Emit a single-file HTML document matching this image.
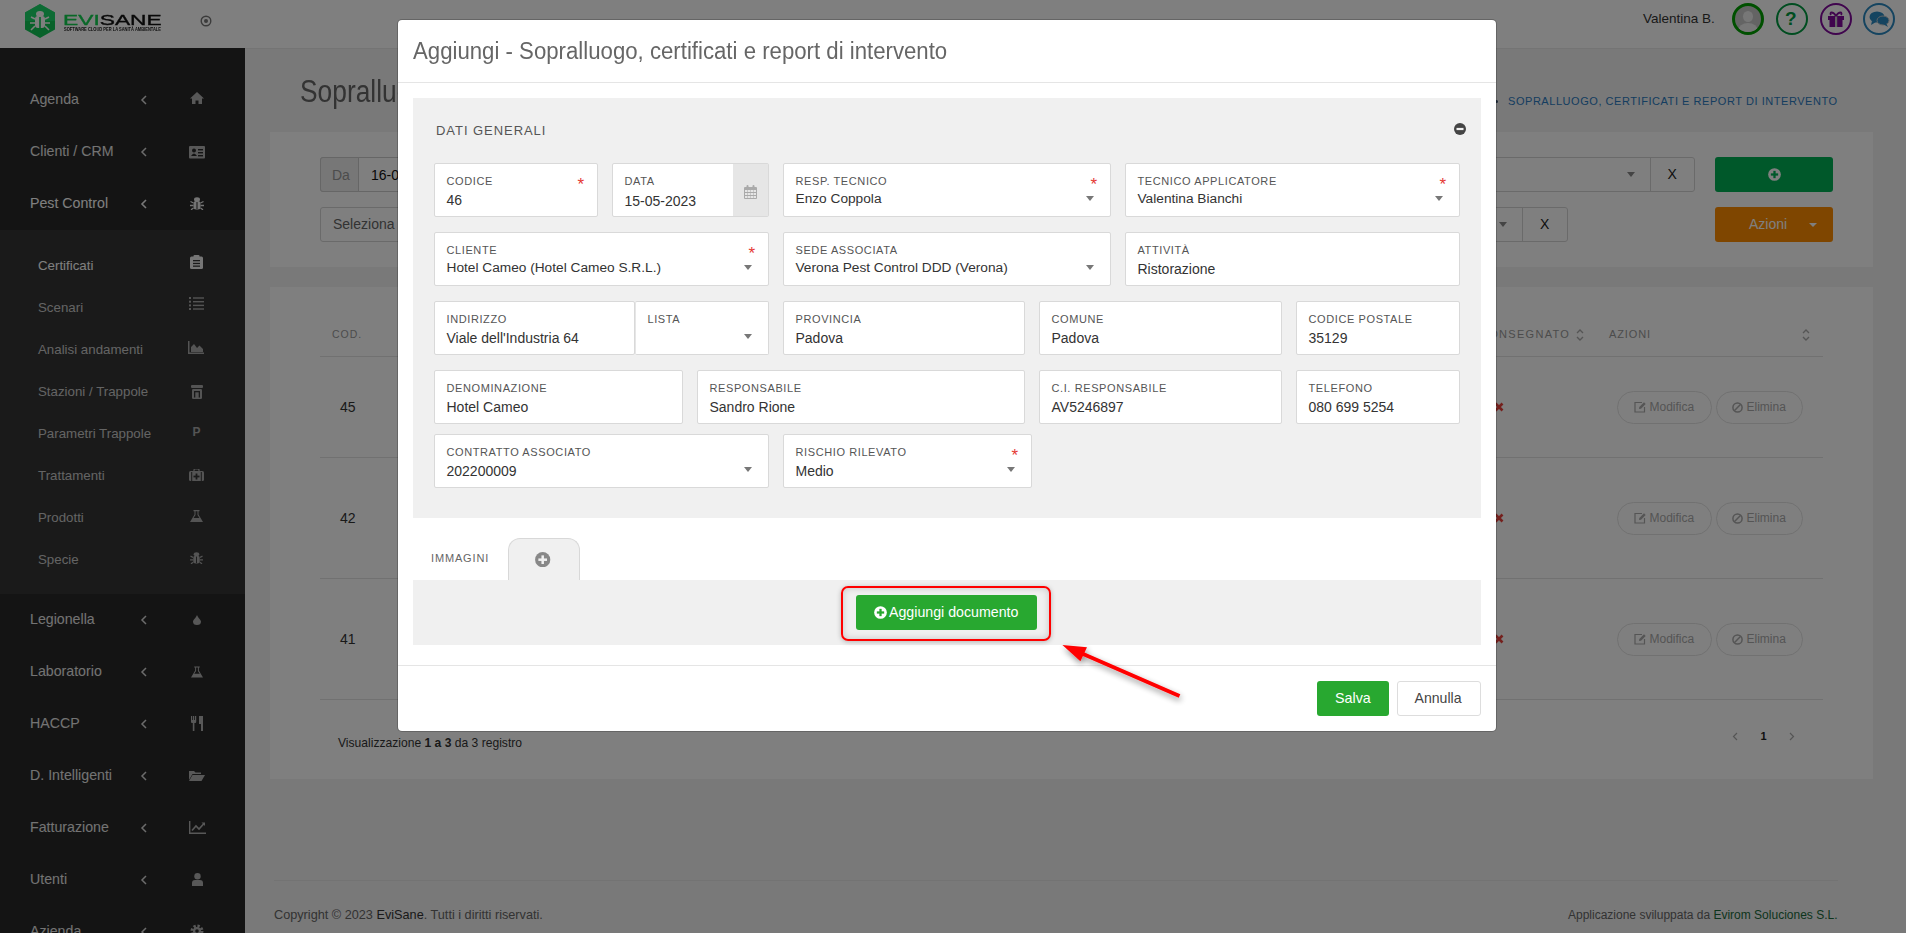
<!DOCTYPE html>
<html><head><meta charset="utf-8">
<style>
*{box-sizing:border-box}
html,body{margin:0;padding:0}
body{width:1906px;height:933px;overflow:hidden;position:relative;background:#f2f2f2;font-family:"Liberation Sans",sans-serif;color:#333}
.a{position:absolute}
.t{position:absolute;white-space:nowrap;line-height:1}
/* header */
#hdr{left:0;top:0;width:1906px;height:48px;background:#fff}
/* sidebar */
#side{left:0;top:48px;width:245px;height:885px;background:#292929}
#sub{left:0;top:229.5px;width:245px;height:364px;background:#353535}
.mi{font-size:14.2px;color:#e6e6e6}
.si{font-size:13.3px;color:#c8c8c8}
.chev{font-size:14px;color:#d0d0d0}
.card{background:#fff}
#ovl{left:0;top:0;width:1906px;height:933px;background:rgba(0,0,0,.5)}
/* modal */
#modal{left:397px;top:19px;width:1100px;height:713px;background:#fff;border-radius:5px;border:1px solid rgba(0,0,0,.2);background-clip:padding-box}
.panel{background:#f0f0f0}
.box{position:absolute;background:#fff;border:1px solid #d9d9d9;border-radius:2px}
.lbl{position:absolute;white-space:nowrap;line-height:1;font-size:11px;letter-spacing:.6px;color:#555;left:11.5px;top:11.5px}
.val{position:absolute;white-space:nowrap;line-height:1;font-size:14px;color:#333;left:11.5px;top:28.8px}
.dval{position:absolute;white-space:nowrap;line-height:1;font-size:14px;color:#333;left:11.5px;top:29.5px}
.sval{position:absolute;white-space:nowrap;line-height:1;font-size:13.7px;color:#333;left:11.5px;top:27.9px}
.req{position:absolute;color:#e53935;font-size:17px;line-height:1;top:11.5px;right:13px}
.caret{position:absolute;width:0;height:0;border-left:4px solid transparent;border-right:4px solid transparent;border-top:5px solid #777;top:31.5px;right:16px}
</style></head><body>

<!-- ===== BACKGROUND PAGE ===== -->
<div id="hdr" class="a">
  <svg class="a" style="left:24px;top:3px" width="32" height="36" viewBox="0 0 32 36">
    <polygon points="16,1 31,9.5 31,26.5 16,35 1,26.5 1,9.5" fill="#10c455"/>
    <polygon points="16,1 31,9.5 31,18 1,18 1,9.5" fill="#20e070" opacity=".7"/>
    <g fill="#fff">
      <ellipse cx="16" cy="11" rx="4" ry="3"/>
      <rect x="11" y="13" width="10" height="12" rx="3"/>
    </g>
    <g stroke="#fff" stroke-width="1.6" fill="none">
      <path d="M11 16 L7 14 M11 20 L6 20 M11 23 L7 27 M21 16 L25 14 M21 20 L26 20 M21 23 L25 27"/>
    </g>
    <rect x="15.2" y="14" width="1.6" height="11" fill="#10c455"/>
  </svg>
  <div class="t" style="left:63.3px;top:12px;font-size:17px;font-weight:normal;color:#111;transform:scale(1.34,0.9);transform-origin:0 0;-webkit-text-stroke:0.4px #111"><span style="color:#12d050;-webkit-text-stroke:0.4px #12d050">EVI</span>SANE</div>
  <div class="t" style="left:64px;top:26px;font-size:6px;font-weight:bold;color:#222;transform:scale(0.67,0.9);transform-origin:0 0">SOFTWARE CLOUD PER LA SANITÀ AMBIENTALE</div>
  <svg class="a" style="left:200px;top:15px" width="12" height="12" viewBox="0 0 12 12"><circle cx="6" cy="6" r="4.8" fill="none" stroke="#777" stroke-width="1.4"/><circle cx="6" cy="6" r="2" fill="#777"/></svg>

  <div class="t" style="left:1643px;top:12px;font-size:13.5px;color:#333">Valentina B.</div>
  <div class="a" style="left:1732px;top:3px;width:32px;height:32px;border-radius:50%;border:3px solid #00a000;background:#c8c8c8;overflow:hidden">
    <div class="a" style="left:8px;top:5px;width:10px;height:11px;border-radius:50%;background:#eee"></div>
    <div class="a" style="left:3px;top:17px;width:20px;height:16px;border-radius:50%;background:#eee"></div>
  </div>
  <div class="a" style="left:1776px;top:3px;width:32px;height:32px;border-radius:50%;border:2px solid #009a40"></div>
  <div class="t" style="left:1785px;top:9px;font-size:19px;font-weight:bold;color:#009a40">?</div>
  <div class="a" style="left:1820px;top:3px;width:32px;height:32px;border-radius:50%;border:2px solid #800a9c"></div>
  <svg class="a" style="left:1826px;top:10px" width="20" height="18" viewBox="0 0 20 18"><g fill="#800a9c"><rect x="2" y="6" width="16" height="4"/><rect x="3.5" y="10" width="13" height="7"/></g><rect x="9" y="6" width="2.2" height="11" fill="#c8c8c8"/><path d="M10 6 C7 1 3 2 5 5 M10 6 C13 1 17 2 15 5" stroke="#800a9c" stroke-width="1.8" fill="none"/></svg>
  <div class="a" style="left:1863px;top:3px;width:32px;height:32px;border-radius:50%;border:2px solid #2a88c0"></div>
  <svg class="a" style="left:1869px;top:10px" width="21" height="18" viewBox="0 0 21 18"><ellipse cx="8" cy="7" rx="7.5" ry="5.5" fill="#2a88c0"/><path d="M3 11 L2 15 L7 12Z" fill="#2a88c0"/><ellipse cx="14" cy="10.5" rx="6" ry="4.5" fill="#2a88c0" stroke="#c8c8c8" stroke-width="1"/><path d="M17 13 L19 17 L14 14Z" fill="#2a88c0"/></svg>
</div>

<div class="a" style="left:245px;top:48px;width:1661px;height:1px;background:#e8e8e8"></div>
<div id="side" class="a"></div>
<div id="sub" class="a"></div>
<div id="sidetext">
  <div class="t mi" style="left:30px;top:92px">Agenda</div>
  <div class="t mi" style="left:30px;top:144px">Clienti / CRM</div>
  <div class="t mi" style="left:30px;top:196px;color:#fff">Pest Control</div>
  <div class="t si" style="left:38px;top:258.5px;color:#fff">Certificati</div>
  <div class="t si" style="left:38px;top:300.5px">Scenari</div>
  <div class="t si" style="left:38px;top:342.5px">Analisi andamenti</div>
  <div class="t si" style="left:38px;top:384.5px">Stazioni / Trappole</div>
  <div class="t si" style="left:38px;top:426.5px">Parametri Trappole</div>
  <div class="t si" style="left:38px;top:468.5px">Trattamenti</div>
  <div class="t si" style="left:38px;top:510.5px">Prodotti</div>
  <div class="t si" style="left:38px;top:552.5px">Specie</div>
  <div class="t mi" style="left:30px;top:612px">Legionella</div>
  <div class="t mi" style="left:30px;top:664px">Laboratorio</div>
  <div class="t mi" style="left:30px;top:716px">HACCP</div>
  <div class="t mi" style="left:30px;top:768px">D. Intelligenti</div>
  <div class="t mi" style="left:30px;top:820px">Fatturazione</div>
  <div class="t mi" style="left:30px;top:872px">Utenti</div>
  <div class="t mi" style="left:30px;top:924px">Azienda</div>
</div>

<!-- content -->
<div class="t" style="left:299.7px;top:76.3px;font-size:31px;color:#666;transform:scaleX(0.85);transform-origin:0 0">Sopralluogo, certificati e report di intervento</div>
<div class="t" style="left:1508px;top:95.5px;font-size:11px;letter-spacing:.55px;color:#2b7bc0">SOPRALLUOGO, CERTIFICATI E REPORT DI INTERVENTO</div>

<div class="a card" style="left:270px;top:132px;width:1603px;height:135px"></div>
<div class="a card" style="left:270px;top:287px;width:1603px;height:492px"></div>

<div id="sideicons">
 <!-- chevrons -->
 <svg class="a" style="left:140px;top:94.5px" width="8" height="10" viewBox="0 0 8 10"><path d="M6 1 L2 5 L6 9" fill="none" stroke="#d8d8d8" stroke-width="1.5"/></svg>
 <svg class="a" style="left:140px;top:146.5px" width="8" height="10" viewBox="0 0 8 10"><path d="M6 1 L2 5 L6 9" fill="none" stroke="#d8d8d8" stroke-width="1.5"/></svg>
 <svg class="a" style="left:140px;top:198.5px" width="8" height="10" viewBox="0 0 8 10"><path d="M6 1 L2 5 L6 9" fill="none" stroke="#f0f0f0" stroke-width="1.6"/></svg>
 <svg class="a" style="left:140px;top:614.5px" width="8" height="10" viewBox="0 0 8 10"><path d="M6 1 L2 5 L6 9" fill="none" stroke="#d8d8d8" stroke-width="1.5"/></svg>
 <svg class="a" style="left:140px;top:666.5px" width="8" height="10" viewBox="0 0 8 10"><path d="M6 1 L2 5 L6 9" fill="none" stroke="#d8d8d8" stroke-width="1.5"/></svg>
 <svg class="a" style="left:140px;top:718.5px" width="8" height="10" viewBox="0 0 8 10"><path d="M6 1 L2 5 L6 9" fill="none" stroke="#d8d8d8" stroke-width="1.5"/></svg>
 <svg class="a" style="left:140px;top:770.5px" width="8" height="10" viewBox="0 0 8 10"><path d="M6 1 L2 5 L6 9" fill="none" stroke="#d8d8d8" stroke-width="1.5"/></svg>
 <svg class="a" style="left:140px;top:822.5px" width="8" height="10" viewBox="0 0 8 10"><path d="M6 1 L2 5 L6 9" fill="none" stroke="#d8d8d8" stroke-width="1.5"/></svg>
 <svg class="a" style="left:140px;top:874.5px" width="8" height="10" viewBox="0 0 8 10"><path d="M6 1 L2 5 L6 9" fill="none" stroke="#d8d8d8" stroke-width="1.5"/></svg>
 <svg class="a" style="left:140px;top:926.5px" width="8" height="10" viewBox="0 0 8 10"><path d="M6 1 L2 5 L6 9" fill="none" stroke="#d8d8d8" stroke-width="1.5"/></svg>
 <!-- main icons -->
 <svg class="a" style="left:190px;top:92px" width="14" height="12" viewBox="0 0 14 12"><path d="M7 0 L14 6.5 L12 6.5 L12 12 L8.5 12 L8.5 8.5 L5.5 8.5 L5.5 12 L2 12 L2 6.5 L0 6.5Z" fill="#b0b0b0"/></svg>
 <svg class="a" style="left:189px;top:145.5px" width="16" height="13" viewBox="0 0 16 13"><rect x="0" y="0" width="16" height="12.5" rx="1" fill="#b0b0b0"/><circle cx="5" cy="4.5" r="2" fill="#292929"/><path d="M2 10 Q5 5 8 10Z" fill="#292929"/><rect x="9" y="3" width="5" height="1.4" fill="#292929"/><rect x="9" y="6" width="5" height="1.4" fill="#292929"/><rect x="9" y="9" width="5" height="1.4" fill="#292929"/></svg>
 <svg class="a" style="left:190px;top:197px" width="14" height="13" viewBox="0 0 14 13"><ellipse cx="7" cy="2.5" rx="3" ry="2.3" fill="#e8e8e8"/><rect x="3.5" y="4" width="7" height="8.5" rx="2.5" fill="#e8e8e8"/><path d="M3.5 6 L0.5 4.5 M3.5 8.5 L0 8.5 M3.5 11 L1 12.8 M10.5 6 L13.5 4.5 M10.5 8.5 L14 8.5 M10.5 11 L13 12.8" stroke="#e8e8e8" stroke-width="1.3"/><rect x="6.5" y="5" width="1" height="7" fill="#292929"/></svg>
 <!-- sub icons -->
 <svg class="a" style="left:189.5px;top:255px" width="13" height="14" viewBox="0 0 13 14"><rect x="0" y="1.5" width="13" height="12.5" rx="1.5" fill="#ececec"/><rect x="3.5" y="0" width="6" height="3" rx="1" fill="#ececec"/><g fill="#353535"><rect x="3" y="5" width="7" height="1.3"/><rect x="3" y="7.8" width="7" height="1.3"/><rect x="3" y="10.5" width="7" height="1.3"/></g></svg>
 <svg class="a" style="left:189px;top:297px" width="15" height="13" viewBox="0 0 15 13"><g fill="#a8a8a8"><rect x="0" y="0" width="2" height="2"/><rect x="0" y="3.7" width="2" height="2"/><rect x="0" y="7.4" width="2" height="2"/><rect x="0" y="11" width="2" height="2"/><rect x="4" y="0.3" width="11" height="1.4"/><rect x="4" y="4" width="11" height="1.4"/><rect x="4" y="7.7" width="11" height="1.4"/><rect x="4" y="11.3" width="11" height="1.4"/></g></svg>
 <svg class="a" style="left:187.5px;top:341px" width="16" height="13" viewBox="0 0 16 13"><path d="M0 0 L1.5 0 L1.5 11.5 L16 11.5 L16 13 L0 13Z M3 11 L3 6 L6 3 L9 7 L11.5 4.5 L15 8 L15 11Z" fill="#a8a8a8"/></svg>
 <svg class="a" style="left:190.5px;top:385px" width="12" height="14" viewBox="0 0 12 14"><g fill="#a8a8a8"><rect x="0" y="0" width="12" height="3" rx="1"/><rect x="1" y="4" width="10" height="10" rx="1.2"/></g><rect x="3" y="6" width="6" height="1.3" fill="#353535"/><rect x="3" y="6" width="1.3" height="6.5" fill="#353535"/><rect x="7.7" y="6" width="1.3" height="6.5" fill="#353535"/></svg>
 <div class="t" style="left:192.5px;top:426px;font-size:12px;font-weight:bold;color:#a8a8a8">P</div>
 <svg class="a" style="left:188.5px;top:469px" width="15" height="12" viewBox="0 0 15 12"><rect x="0" y="2" width="15" height="10" rx="1.5" fill="#a8a8a8"/><rect x="5" y="0" width="5" height="3" rx="1" fill="none" stroke="#a8a8a8" stroke-width="1.2"/><rect x="2.2" y="3" width="1" height="9" fill="#353535"/><rect x="11.8" y="3" width="1" height="9" fill="#353535"/><rect x="6.6" y="4.5" width="1.8" height="6" fill="#353535"/><rect x="4.5" y="6.6" width="6" height="1.8" fill="#353535"/></svg>
 <svg class="a" style="left:189.5px;top:510px" width="13" height="12" viewBox="0 0 13 12"><path d="M3.5 0 L9.5 0 L9.5 1.2 L8.5 1.2 L8.5 4.5 L13 12 L0 12 L4.5 4.5 L4.5 1.2 L3.5 1.2Z" fill="#a8a8a8"/><path d="M5.5 1.2 L7.5 1.2 L7.5 5 L9.5 8 L3.5 8 L5.5 5Z" fill="#353535"/></svg>
 <svg class="a" style="left:189.5px;top:552px" width="13" height="12" viewBox="0 0 14 13"><ellipse cx="7" cy="2.5" rx="3" ry="2.3" fill="#a8a8a8"/><rect x="3.5" y="4" width="7" height="8.5" rx="2.5" fill="#a8a8a8"/><path d="M3.5 6 L0.5 4.5 M3.5 8.5 L0 8.5 M3.5 11 L1 12.8 M10.5 6 L13.5 4.5 M10.5 8.5 L14 8.5 M10.5 11 L13 12.8" stroke="#a8a8a8" stroke-width="1.3"/><rect x="6.5" y="5" width="1" height="7" fill="#353535"/></svg>
 <!-- lower main icons -->
 <svg class="a" style="left:192.5px;top:614.5px" width="8" height="10" viewBox="0 0 8 10"><path d="M4 0 C5 3 8 5 8 6.5 A4 3.5 0 0 1 0 6.5 C0 5 3 3 4 0Z" fill="#b0b0b0"/></svg>
 <svg class="a" style="left:191px;top:666px" width="12" height="12" viewBox="0 0 13 12"><path d="M3.5 0 L9.5 0 L9.5 1.2 L8.5 1.2 L8.5 4.5 L13 12 L0 12 L4.5 4.5 L4.5 1.2 L3.5 1.2Z" fill="#b0b0b0"/><path d="M5.5 1.2 L7.5 1.2 L7.5 5 L9.5 8 L3.5 8 L5.5 5Z" fill="#292929"/></svg>
 <svg class="a" style="left:191px;top:716px" width="12" height="15" viewBox="0 0 12 15"><g fill="#b0b0b0"><rect x="0" y="0" width="1.2" height="5"/><rect x="2" y="0" width="1.2" height="5"/><rect x="4" y="0" width="1.2" height="5"/><rect x="0" y="4" width="5.2" height="3" rx="1"/><rect x="1.8" y="6" width="1.6" height="9"/><path d="M8 0 L12 0 L12 15 L10 15 L10 8 L8 8Z"/></g></svg>
 <svg class="a" style="left:189px;top:770px" width="16" height="11" viewBox="0 0 16 11"><path d="M0 1 L5 1 L6.5 2.5 L12 2.5 L12 4 L3.5 4 L0 10Z" fill="#b0b0b0"/><path d="M3.5 5 L16 5 L12.5 11 L0 11Z" fill="#b0b0b0"/></svg>
 <svg class="a" style="left:188.5px;top:821px" width="17" height="13" viewBox="0 0 17 13"><path d="M0 0 L1.4 0 L1.4 11.6 L17 11.6 L17 13 L0 13Z" fill="#b0b0b0"/><path d="M3 9.5 L7 5 L10 8 L15 2.5" fill="none" stroke="#b0b0b0" stroke-width="1.6"/><path d="M12.5 1.5 L16 1.5 L16 5Z" fill="#b0b0b0"/></svg>
 <svg class="a" style="left:192px;top:873px" width="11" height="13" viewBox="0 0 11 13"><circle cx="5.5" cy="3.2" r="3.2" fill="#b0b0b0"/><path d="M0 13 L0 10 Q0 7 3 7 L8 7 Q11 7 11 10 L11 13Z" fill="#b0b0b0"/></svg>
 <svg class="a" style="left:190px;top:924px" width="14" height="14" viewBox="0 0 14 14"><circle cx="7" cy="7" r="5" fill="none" stroke="#b0b0b0" stroke-width="3" stroke-dasharray="2.2 1.7"/><circle cx="7" cy="7" r="4" fill="#b0b0b0"/><circle cx="7" cy="7" r="1.8" fill="#292929"/></svg>
</div>

<!-- filter card content -->
<div class="a" style="left:320px;top:157px;width:400px;height:35px;border:1px solid #ccc;border-radius:3px;background:#fff"></div>
<div class="a" style="left:320px;top:157px;width:39px;height:35px;border:1px solid #ccc;border-radius:3px 0 0 3px;background:#eee"></div>
<div class="t" style="left:332px;top:168px;font-size:14px;color:#999">Da</div>
<div class="t" style="left:371px;top:168px;font-size:14px;color:#111">16-05-2023</div>
<div class="a" style="left:320px;top:207px;width:400px;height:35px;border:1px solid #d5d5d5;border-radius:3px;background:#fff"></div>
<div class="t" style="left:333px;top:217px;font-size:14px;color:#666">Seleziona</div>
<!-- right selects -->
<div class="a" style="left:1400px;top:157px;width:295px;height:35px;border:1px solid #d5d5d5;border-radius:0 3px 3px 0;background:#fff"></div>
<div class="a" style="left:1650px;top:157px;width:1px;height:35px;background:#d5d5d5"></div>
<div class="a" style="left:1627px;top:172px;width:0;height:0;border-left:4px solid transparent;border-right:4px solid transparent;border-top:5px solid #888"></div>
<div class="t" style="left:1667.5px;top:167px;font-size:14px;color:#222">X</div>
<div class="a" style="left:1400px;top:207px;width:168px;height:35px;border:1px solid #d5d5d5;border-radius:0 3px 3px 0;background:#fff"></div>
<div class="a" style="left:1522px;top:207px;width:1px;height:35px;background:#d5d5d5"></div>
<div class="a" style="left:1499px;top:222px;width:0;height:0;border-left:4px solid transparent;border-right:4px solid transparent;border-top:5px solid #888"></div>
<div class="t" style="left:1540px;top:217px;font-size:14px;color:#222">X</div>
<div class="a" style="left:1715px;top:157px;width:118px;height:35px;background:#00b055;border-radius:3px"></div>
<svg class="a" style="left:1768px;top:168px" width="13" height="13" viewBox="0 0 16 16"><circle cx="8" cy="8" r="7.8" fill="#fff"/><rect x="3.5" y="6.6" width="9" height="2.8" fill="#00b055"/><rect x="6.6" y="3.5" width="2.8" height="9" fill="#00b055"/></svg>
<div class="a" style="left:1715px;top:207px;width:118px;height:35px;background:#fe8d00;border-radius:3px"></div>
<div class="t" style="left:1749px;top:217px;font-size:14px;color:#fff">Azioni</div>
<div class="a" style="left:1809px;top:223px;width:0;height:0;border-left:4px solid transparent;border-right:4px solid transparent;border-top:4.5px solid #fff"></div>

<!-- table -->
<div class="t" style="left:332px;top:329px;font-size:10.5px;letter-spacing:1px;color:#999">COD.</div>
<div class="t" style="left:1480px;top:329px;font-size:11px;letter-spacing:1.3px;color:#999">CONSEGNATO</div>
<svg class="a" style="left:1575.5px;top:328.5px" width="8" height="12" viewBox="0 0 8 12"><path d="M1 4 L4 1 L7 4 M1 8 L4 11 L7 8" fill="none" stroke="#aaa" stroke-width="1.4"/></svg>
<div class="t" style="left:1609px;top:329px;font-size:11px;letter-spacing:.9px;color:#999">AZIONI</div>
<svg class="a" style="left:1801.5px;top:328.5px" width="8" height="12" viewBox="0 0 8 12"><path d="M1 4 L4 1 L7 4 M1 8 L4 11 L7 8" fill="none" stroke="#aaa" stroke-width="1.4"/></svg>
<div class="a" style="left:320px;top:356px;width:1503px;height:1px;background:#e3e3e3"></div>
<div class="a" style="left:320px;top:457px;width:1503px;height:1px;background:#e3e3e3"></div>
<div class="a" style="left:320px;top:578px;width:1503px;height:1px;background:#e3e3e3"></div>
<div class="a" style="left:320px;top:699px;width:1503px;height:1px;background:#e3e3e3"></div>
<div class="t" style="left:340px;top:400px;font-size:14px;color:#333">45</div>
<svg class="a" style="left:1494px;top:402px" width="10" height="10" viewBox="0 0 10 10"><path d="M1.5 1.5 L8.5 8.5 M8.5 1.5 L1.5 8.5" stroke="#e8403a" stroke-width="2.6"/></svg>
<div class="a" style="left:1617px;top:390.5px;width:95px;height:33px;border:1px solid #e2e2e2;border-radius:17px"></div>
<svg class="a" style="left:1633.5px;top:401px" width="12" height="12" viewBox="0 0 12 12"><path d="M8 1.5 L1 1.5 L1 11 L10.5 11 L10.5 6" fill="none" stroke="#aaa" stroke-width="1.2"/><path d="M5 8 L5.3 6 L10 1.3 L11.7 3 L7 7.7Z" fill="#aaa"/></svg>
<div class="t" style="left:1649.5px;top:400.5px;font-size:12px;color:#aaa">Modifica</div>
<div class="a" style="left:1716px;top:390.5px;width:87px;height:33px;border:1px solid #e2e2e2;border-radius:17px"></div>
<svg class="a" style="left:1732px;top:401.5px" width="11" height="11" viewBox="0 0 11 11"><circle cx="5.5" cy="5.5" r="4.6" fill="none" stroke="#aaa" stroke-width="1.5"/><path d="M2.3 8.7 L8.7 2.3" stroke="#aaa" stroke-width="1.5"/></svg>
<div class="t" style="left:1746.5px;top:400.5px;font-size:12px;color:#aaa">Elimina</div>
<div class="t" style="left:340px;top:511px;font-size:14px;color:#333">42</div>
<svg class="a" style="left:1494px;top:513px" width="10" height="10" viewBox="0 0 10 10"><path d="M1.5 1.5 L8.5 8.5 M8.5 1.5 L1.5 8.5" stroke="#e8403a" stroke-width="2.6"/></svg>
<div class="a" style="left:1617px;top:501.5px;width:95px;height:33px;border:1px solid #e2e2e2;border-radius:17px"></div>
<svg class="a" style="left:1633.5px;top:512px" width="12" height="12" viewBox="0 0 12 12"><path d="M8 1.5 L1 1.5 L1 11 L10.5 11 L10.5 6" fill="none" stroke="#aaa" stroke-width="1.2"/><path d="M5 8 L5.3 6 L10 1.3 L11.7 3 L7 7.7Z" fill="#aaa"/></svg>
<div class="t" style="left:1649.5px;top:511.5px;font-size:12px;color:#aaa">Modifica</div>
<div class="a" style="left:1716px;top:501.5px;width:87px;height:33px;border:1px solid #e2e2e2;border-radius:17px"></div>
<svg class="a" style="left:1732px;top:512.5px" width="11" height="11" viewBox="0 0 11 11"><circle cx="5.5" cy="5.5" r="4.6" fill="none" stroke="#aaa" stroke-width="1.5"/><path d="M2.3 8.7 L8.7 2.3" stroke="#aaa" stroke-width="1.5"/></svg>
<div class="t" style="left:1746.5px;top:511.5px;font-size:12px;color:#aaa">Elimina</div>
<div class="t" style="left:340px;top:632px;font-size:14px;color:#333">41</div>
<svg class="a" style="left:1494px;top:634px" width="10" height="10" viewBox="0 0 10 10"><path d="M1.5 1.5 L8.5 8.5 M8.5 1.5 L1.5 8.5" stroke="#e8403a" stroke-width="2.6"/></svg>
<div class="a" style="left:1617px;top:622.5px;width:95px;height:33px;border:1px solid #e2e2e2;border-radius:17px"></div>
<svg class="a" style="left:1633.5px;top:633px" width="12" height="12" viewBox="0 0 12 12"><path d="M8 1.5 L1 1.5 L1 11 L10.5 11 L10.5 6" fill="none" stroke="#aaa" stroke-width="1.2"/><path d="M5 8 L5.3 6 L10 1.3 L11.7 3 L7 7.7Z" fill="#aaa"/></svg>
<div class="t" style="left:1649.5px;top:632.5px;font-size:12px;color:#aaa">Modifica</div>
<div class="a" style="left:1716px;top:622.5px;width:87px;height:33px;border:1px solid #e2e2e2;border-radius:17px"></div>
<svg class="a" style="left:1732px;top:633.5px" width="11" height="11" viewBox="0 0 11 11"><circle cx="5.5" cy="5.5" r="4.6" fill="none" stroke="#aaa" stroke-width="1.5"/><path d="M2.3 8.7 L8.7 2.3" stroke="#aaa" stroke-width="1.5"/></svg>
<div class="t" style="left:1746.5px;top:632.5px;font-size:12px;color:#aaa">Elimina</div>
<div class="t" style="left:338px;top:737px;font-size:12.1px;color:#333">Visualizzazione <b>1 a 3</b> da 3 registro</div>
<svg class="a" style="left:1732px;top:732px" width="6" height="9" viewBox="0 0 6 9"><path d="M5 1 L1.5 4.5 L5 8" fill="none" stroke="#aaa" stroke-width="1.2"/></svg>
<div class="t" style="left:1760.5px;top:731px;font-size:11px;font-weight:bold;color:#222">1</div>
<svg class="a" style="left:1789px;top:732px" width="6" height="9" viewBox="0 0 6 9"><path d="M1 1 L4.5 4.5 L1 8" fill="none" stroke="#aaa" stroke-width="1.2"/></svg>

<!-- footer -->
<div class="a" style="left:274px;top:880px;width:1564px;height:1px;background:#e6e6e6"></div>
<div class="t" style="left:274px;top:909px;font-size:12.7px;color:#666">Copyright © 2023 <span style="color:#333">EviSane</span>. Tutti i diritti riservati.</div>
<div class="t" style="left:1568px;top:909px;font-size:12px;color:#666">Applicazione sviluppata da <span style="color:#1a6a3a">Evirom Soluciones S.L.</span></div>

<!-- ===== OVERLAY ===== -->
<div id="ovl" class="a"></div>

<!-- ===== MODAL ===== -->
<div class="a" style="left:1495px;top:99.5px;width:3px;height:3px;border-radius:50%;background:#1c2838"></div>
<div id="modal" class="a"></div>
<div class="t" style="left:413px;top:40.4px;font-size:23px;color:#666;transform:scaleX(0.965);transform-origin:0 0">Aggiungi - Sopralluogo, certificati e report di intervento</div>
<div class="a" style="left:398px;top:82px;width:1098px;height:1px;background:#e5e5e5"></div>
<div class="a panel" style="left:413px;top:98px;width:1068px;height:420px"></div>
<div class="t" style="left:436px;top:123.5px;font-size:13px;letter-spacing:.95px;color:#555">DATI GENERALI</div>
<svg class="a" style="left:1454px;top:122.5px" width="12" height="12" viewBox="0 0 12 12"><circle cx="6" cy="6" r="6" fill="#444"/><rect x="2.5" y="4.9" width="7" height="2.2" fill="#f0f0f0"/></svg>
<div class="box" style="left:434px;top:163px;width:164px;height:54px;">
<div class="lbl">CODICE</div>
<div class="val">46</div>
<div class="req">*</div>
</div>
<div class="box" style="left:612px;top:163px;width:157px;height:54px;">
<div class="lbl">DATA</div>
<div class="dval">15-05-2023</div>
<div class="a" style="right:0;top:0;width:35px;height:52px;background:#e6e6e6"></div>
<svg class="a" style="right:11px;top:20.5px" width="13" height="14" viewBox="0 0 13 14"><g fill="#aaa"><rect x="0" y="2" width="13" height="12" rx="1"/></g><g fill="#e6e6e6"><rect x="1" y="5" width="2.5" height="2"/><rect x="4" y="5" width="2.5" height="2"/><rect x="7" y="5" width="2.5" height="2"/><rect x="10" y="5" width="2" height="2"/><rect x="1" y="8" width="2.5" height="2"/><rect x="4" y="8" width="2.5" height="2"/><rect x="7" y="8" width="2.5" height="2"/><rect x="10" y="8" width="2" height="2"/><rect x="1" y="11" width="2.5" height="2"/><rect x="4" y="11" width="2.5" height="2"/><rect x="7" y="11" width="2.5" height="2"/><rect x="10" y="11" width="2" height="2"/></g><g fill="#aaa"><rect x="2.5" y="0" width="2" height="3.5" rx="1"/><rect x="8.5" y="0" width="2" height="3.5" rx="1"/></g></svg>
</div>
<div class="box" style="left:783px;top:163px;width:328px;height:54px;">
<div class="lbl">RESP. TECNICO</div>
<div class="sval">Enzo Coppola</div>
<div class="req">*</div>
<div class="caret"></div>
</div>
<div class="box" style="left:1125px;top:163px;width:335px;height:54px;">
<div class="lbl">TECNICO APPLICATORE</div>
<div class="sval">Valentina Bianchi</div>
<div class="req">*</div>
<div class="caret"></div>
</div>
<div class="box" style="left:434px;top:232px;width:335px;height:54px;">
<div class="lbl">CLIENTE</div>
<div class="sval">Hotel Cameo (Hotel Cameo S.R.L.)</div>
<div class="req">*</div>
<div class="caret"></div>
</div>
<div class="box" style="left:783px;top:232px;width:328px;height:54px;">
<div class="lbl">SEDE ASSOCIATA</div>
<div class="sval">Verona Pest Control DDD (Verona)</div>
<div class="caret"></div>
</div>
<div class="box" style="left:1125px;top:232px;width:335px;height:54px;">
<div class="lbl">ATTIVITÀ</div>
<div class="val">Ristorazione</div>
</div>
<div class="box" style="left:434px;top:301px;width:201px;height:54px;">
<div class="lbl">INDIRIZZO</div>
<div class="val">Viale dell'Industria 64</div>
</div>
<div class="box" style="left:635px;top:301px;width:134px;height:54px;border-left-color:#e6e6e6;">
<div class="lbl">LISTA</div>
<div class="caret"></div>
</div>
<div class="box" style="left:783px;top:301px;width:242px;height:54px;">
<div class="lbl">PROVINCIA</div>
<div class="val">Padova</div>
</div>
<div class="box" style="left:1039px;top:301px;width:243px;height:54px;">
<div class="lbl">COMUNE</div>
<div class="val">Padova</div>
</div>
<div class="box" style="left:1296px;top:301px;width:164px;height:54px;">
<div class="lbl">CODICE POSTALE</div>
<div class="val">35129</div>
</div>
<div class="box" style="left:434px;top:370px;width:249px;height:54px;">
<div class="lbl">DENOMINAZIONE</div>
<div class="val">Hotel Cameo</div>
</div>
<div class="box" style="left:697px;top:370px;width:328px;height:54px;">
<div class="lbl">RESPONSABILE</div>
<div class="val">Sandro Rione</div>
</div>
<div class="box" style="left:1039px;top:370px;width:243px;height:54px;">
<div class="lbl">C.I. RESPONSABILE</div>
<div class="val">AV5246897</div>
</div>
<div class="box" style="left:1296px;top:370px;width:164px;height:54px;">
<div class="lbl">TELEFONO</div>
<div class="val">080 699 5254</div>
</div>
<div class="box" style="left:434px;top:434px;width:335px;height:54px;">
<div class="lbl">CONTRATTO ASSOCIATO</div>
<div class="val">202200009</div>
<div class="caret"></div>
</div>
<div class="box" style="left:783px;top:434px;width:249px;height:54px;">
<div class="lbl">RISCHIO RILEVATO</div>
<div class="val">Medio</div>
<div class="req">*</div>
<div class="caret"></div>
</div>

<!-- tabs -->
<div class="t" style="left:431px;top:553px;font-size:11px;letter-spacing:.85px;color:#666">IMMAGINI</div>
<div class="a panel" style="left:508px;top:538px;width:72px;height:43px;border-radius:12px 12px 0 0;border:1px solid #d8d8d8;border-bottom:none"></div>
<svg class="a" style="left:535.3px;top:551.8px" width="15.4" height="15.4" viewBox="0 0 16 16"><circle cx="8" cy="8" r="7.9" fill="#888"/><rect x="3.5" y="6.7" width="9" height="2.6" fill="#f0f0f0"/><rect x="6.7" y="3.5" width="2.6" height="9" fill="#f0f0f0"/></svg>
<div class="a panel" style="left:413px;top:580px;width:1068px;height:65px"></div>
<div class="a" style="left:840.5px;top:585.5px;width:210px;height:55px;border:2.5px solid #ff0000;border-radius:7px;box-shadow:0 1px 5px rgba(0,0,0,.25), inset 0 0 7px rgba(0,0,0,.18)"></div>
<div class="a" style="left:856px;top:595px;width:181px;height:35px;background:#28a830;border-radius:3px"></div>
<svg class="a" style="left:873.5px;top:605.5px" width="13" height="13" viewBox="0 0 16 16"><circle cx="8" cy="8" r="7.8" fill="#fff"/><rect x="3.5" y="6.6" width="9" height="2.8" fill="#28a830"/><rect x="6.6" y="3.5" width="2.8" height="9" fill="#28a830"/></svg>
<div class="t" style="left:889px;top:604.5px;font-size:14.2px;color:#fff">Aggiungi documento</div>
<!-- footer -->
<div class="a" style="left:398px;top:665px;width:1098px;height:1px;background:#e5e5e5"></div>
<div class="a" style="left:1317px;top:681px;width:72px;height:35px;background:#28a830;border-radius:3px"></div>
<div class="t" style="left:1335px;top:690.5px;font-size:14.3px;color:#fff">Salva</div>
<div class="a" style="left:1397px;top:681px;width:84px;height:35px;background:#fff;border:1px solid #ddd;border-radius:3px"></div>
<div class="t" style="left:1414.5px;top:690.5px;font-size:14.1px;color:#444">Annulla</div>
<!-- arrow -->
<svg class="a" style="left:1040px;top:630px;overflow:visible" width="160" height="90" viewBox="1040 630 160 90">
  <defs><filter id="sh" x="-30%" y="-50%" width="160%" height="200%"><feGaussianBlur in="SourceAlpha" stdDeviation="3"/><feOffset dx="1" dy="3"/><feComponentTransfer><feFuncA type="linear" slope=".45"/></feComponentTransfer><feMerge><feMergeNode/><feMergeNode in="SourceGraphic"/></feMerge></filter></defs>
  <g filter="url(#sh)">
    <line x1="1179.5" y1="696" x2="1082" y2="653.5" stroke="#ff0000" stroke-width="4"/>
    <polygon points="1062.4,645 1087,647.2 1080.4,661.3" fill="#ff0000"/>
  </g>
</svg>

</body></html>
